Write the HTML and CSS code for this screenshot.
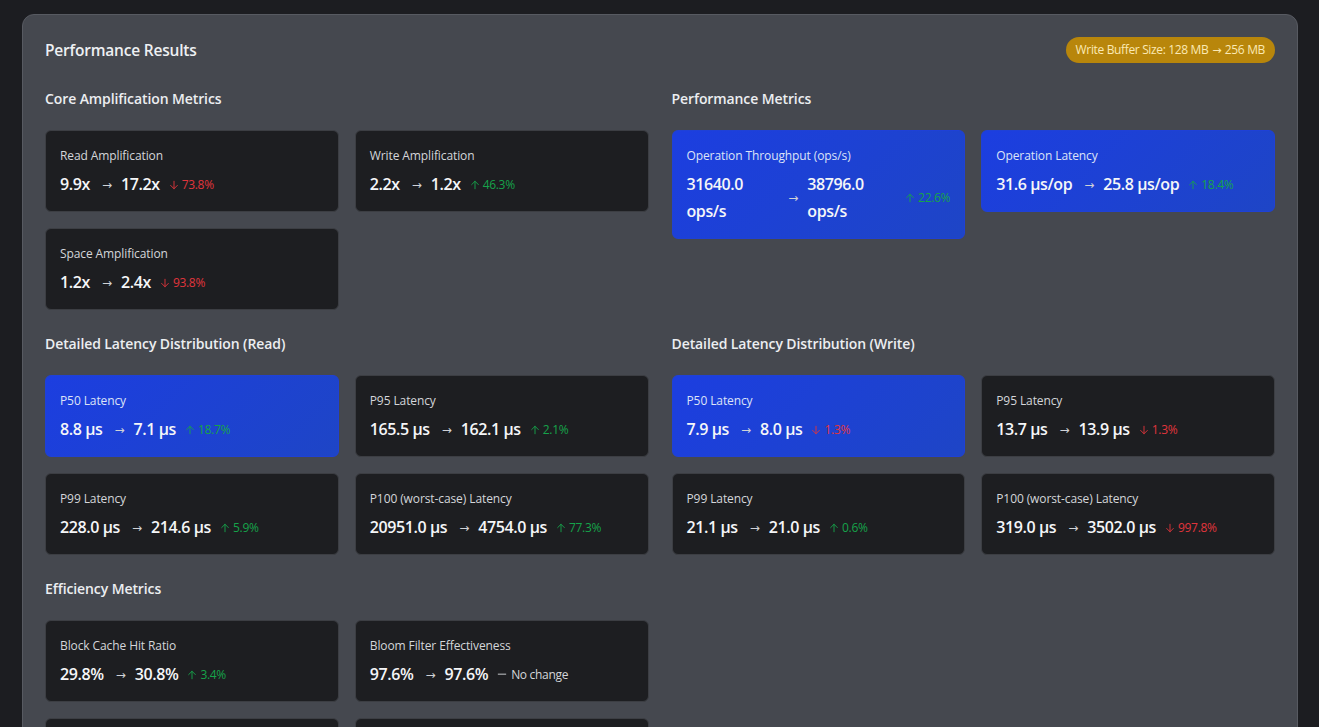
FILE: index.html
```html
<!DOCTYPE html>
<html lang="en">
<head>
<meta charset="utf-8">
<title>Performance Results</title>
<link rel="stylesheet" href="styles.css">
</head>
<body>
<svg width="0" height="0" class="defs">
  <symbol id="up" viewBox="0 0 24 24"><path d="M12 21V3M4 11l8-8 8 8"/></symbol>
  <symbol id="down" viewBox="0 0 24 24"><path d="M12 3v18M20 13l-8 8-8-8"/></symbol>
  <symbol id="minus" viewBox="0 0 24 24"><path d="M3 10h18"/></symbol>
</svg>
<main class="panel">
  <header class="panel-head">
    <h1 class="title">Performance Results</h1>
    <span class="badge">Write Buffer Size: 128 MB <span class="badge-arrow">→</span> 256 MB</span>
  </header>
  <div class="sections">
    <section class="section">
      <h2 class="section-title">Core Amplification Metrics</h2>
      <div class="cards">
        <div class="card"><div class="label">Read Amplification</div><div class="values"><span class="val">9.9x</span><span class="arrow">→</span><span class="val">17.2x</span><span class="chg bad"><svg class="ico"><use href="#down"/></svg>73.8%</span></div></div>
        <div class="card"><div class="label">Write Amplification</div><div class="values"><span class="val">2.2x</span><span class="arrow">→</span><span class="val">1.2x</span><span class="chg good"><svg class="ico"><use href="#up"/></svg>46.3%</span></div></div>
        <div class="card"><div class="label">Space Amplification</div><div class="values"><span class="val">1.2x</span><span class="arrow">→</span><span class="val">2.4x</span><span class="chg bad"><svg class="ico"><use href="#down"/></svg>93.8%</span></div></div>
      </div>
    </section>
    <section class="section">
      <h2 class="section-title">Performance Metrics</h2>
      <div class="cards">
        <div class="card blue"><div class="label">Operation Throughput (ops/s)</div><div class="values"><span class="val">31640.0 ops/s</span><span class="arrow">→</span><span class="val">38796.0 ops/s</span><span class="chg good push"><svg class="ico"><use href="#up"/></svg>22.6%</span></div></div>
        <div class="card blue"><div class="label">Operation Latency</div><div class="values"><span class="val">31.6 μs/op</span><span class="arrow">→</span><span class="val">25.8 μs/op</span><span class="chg good"><svg class="ico"><use href="#up"/></svg>18.4%</span></div></div>
      </div>
    </section>
    <section class="section">
      <h2 class="section-title">Detailed Latency Distribution (Read)</h2>
      <div class="cards">
        <div class="card blue"><div class="label">P50 Latency</div><div class="values"><span class="val">8.8 μs</span><span class="arrow">→</span><span class="val">7.1 μs</span><span class="chg good"><svg class="ico"><use href="#up"/></svg>18.7%</span></div></div>
        <div class="card"><div class="label">P95 Latency</div><div class="values"><span class="val">165.5 μs</span><span class="arrow">→</span><span class="val">162.1 μs</span><span class="chg good"><svg class="ico"><use href="#up"/></svg>2.1%</span></div></div>
        <div class="card"><div class="label">P99 Latency</div><div class="values"><span class="val">228.0 μs</span><span class="arrow">→</span><span class="val">214.6 μs</span><span class="chg good"><svg class="ico"><use href="#up"/></svg>5.9%</span></div></div>
        <div class="card"><div class="label">P100 (worst-case) Latency</div><div class="values"><span class="val">20951.0 μs</span><span class="arrow">→</span><span class="val">4754.0 μs</span><span class="chg good"><svg class="ico"><use href="#up"/></svg>77.3%</span></div></div>
      </div>
    </section>
    <section class="section">
      <h2 class="section-title">Detailed Latency Distribution (Write)</h2>
      <div class="cards">
        <div class="card blue"><div class="label">P50 Latency</div><div class="values"><span class="val">7.9 μs</span><span class="arrow">→</span><span class="val">8.0 μs</span><span class="chg bad"><svg class="ico"><use href="#down"/></svg>1.3%</span></div></div>
        <div class="card"><div class="label">P95 Latency</div><div class="values"><span class="val">13.7 μs</span><span class="arrow">→</span><span class="val">13.9 μs</span><span class="chg bad"><svg class="ico"><use href="#down"/></svg>1.3%</span></div></div>
        <div class="card"><div class="label">P99 Latency</div><div class="values"><span class="val">21.1 μs</span><span class="arrow">→</span><span class="val">21.0 μs</span><span class="chg good"><svg class="ico"><use href="#up"/></svg>0.6%</span></div></div>
        <div class="card"><div class="label">P100 (worst-case) Latency</div><div class="values"><span class="val">319.0 μs</span><span class="arrow">→</span><span class="val">3502.0 μs</span><span class="chg bad"><svg class="ico"><use href="#down"/></svg>997.8%</span></div></div>
      </div>
    </section>
    <section class="section">
      <h2 class="section-title">Efficiency Metrics</h2>
      <div class="cards">
        <div class="card"><div class="label">Block Cache Hit Ratio</div><div class="values"><span class="val">29.8%</span><span class="arrow">→</span><span class="val">30.8%</span><span class="chg good"><svg class="ico"><use href="#up"/></svg>3.4%</span></div></div>
        <div class="card"><div class="label">Bloom Filter Effectiveness</div><div class="values"><span class="val">97.6%</span><span class="arrow">→</span><span class="val">97.6%</span><span class="chg same"><svg class="ico"><use href="#minus"/></svg>No change</span></div></div>
        <div class="card"><div class="label">Compaction Efficiency</div><div class="values"><span class="val">1.0x</span><span class="arrow">→</span><span class="val">1.0x</span><span class="chg same"><svg class="ico"><use href="#minus"/></svg>No change</span></div></div>
        <div class="card"><div class="label">Memtable Flush Rate</div><div class="values"><span class="val">1.0x</span><span class="arrow">→</span><span class="val">1.0x</span><span class="chg same"><svg class="ico"><use href="#minus"/></svg>No change</span></div></div>
      </div>
    </section>
  </div>
</main>
</body>
</html>
```
FILE: styles.css
```css
* { box-sizing: border-box; }
html, body { margin: 0; }
body {
  background: #1c1d21;
  font-family: "Open Sans", "Noto Sans", sans-serif;
  color: #e5e7eb;
  padding: 14px 21px 0 22px;
}
.defs { position: absolute; }
.panel {
  background: #45484f;
  border: 1px solid #575a61;
  border-radius: 12px;
  padding: 22px;
  min-height: 800px;
}
.panel-head {
  display: flex;
  align-items: center;
  justify-content: space-between;
  height: 26px;
  margin-bottom: 24px;
}
.title {
  margin: 0;
  font-size: 15.5px;
  font-weight: 600;
  color: #eef0f3;
  letter-spacing: -0.2px;
}
.badge {
  background: #b8860b;
  color: #fbe9b4;
  font-size: 12px;
  height: 26px;
  line-height: 26px;
  padding: 0 10px;
  border-radius: 13px;
  letter-spacing: -0.35px;
}
.badge-arrow {
  font-family: "DejaVu Sans", sans-serif;
  font-size: 11px;
  margin: 0 1px;
}
.sections {
  display: grid;
  grid-template-columns: 1fr 1fr;
  column-gap: 23px;
  row-gap: 22px;
  align-items: start;
}
.section-title {
  margin: 0 0 20px;
  padding-top: 1px;
  font-size: 14px;
  line-height: 22px;
  font-weight: 600;
  color: #eceef1;
  letter-spacing: -0.1px;
}
.cards {
  display: grid;
  grid-template-columns: 1fr 1fr;
  gap: 16px;
  align-items: start;
}
.card {
  background: #1d1e21;
  border: 1px solid #3c3e43;
  border-radius: 6px;
  padding: 15px 14px 13px;
  min-height: 82px;
}
.card.blue {
  background: linear-gradient(135deg, #1c3ee0 0%, #1e45c6 100%);
  border-color: #1f41d6;
}
.label {
  font-size: 12px;
  line-height: 20px;
  height: 20px;
  color: #d4d6da;
  margin-bottom: 5px;
  letter-spacing: -0.1px;
  white-space: nowrap;
}
.blue .label { color: #dde3f7; }
.values {
  display: flex;
  align-items: center;
  gap: 8px;
  line-height: 27px;
  min-height: 27px;
}
.val {
  font-size: 16px;
  line-height: 27px;
  font-weight: 600;
  color: #f5f6f8;
  letter-spacing: -0.4px;
}
.arrow {
  font-family: "DejaVu Sans", sans-serif;
  font-size: 12px;
  line-height: 16px;
  color: #d0d2d6;
  margin-left: 4px;
  margin-right: 1px;
  flex-shrink: 0;
}
.chg {
  display: inline-flex;
  align-items: center;
  gap: 3px;
  font-size: 12px;
  line-height: 16px;
  white-space: nowrap;
  flex-shrink: 0;
  margin-left: 1px;
  letter-spacing: -0.3px;
}
.chg.push { margin-left: auto; }
.ico {
  width: 10px;
  height: 12px;
  fill: none;
  stroke: currentColor;
  stroke-width: 2.2;
  stroke-linecap: round;
  stroke-linejoin: round;
  flex-shrink: 0;
}
.good { color: #16a34a; }
.bad { color: #e0353c; }
.same { color: #d4d6da; gap: 4px; }
```
